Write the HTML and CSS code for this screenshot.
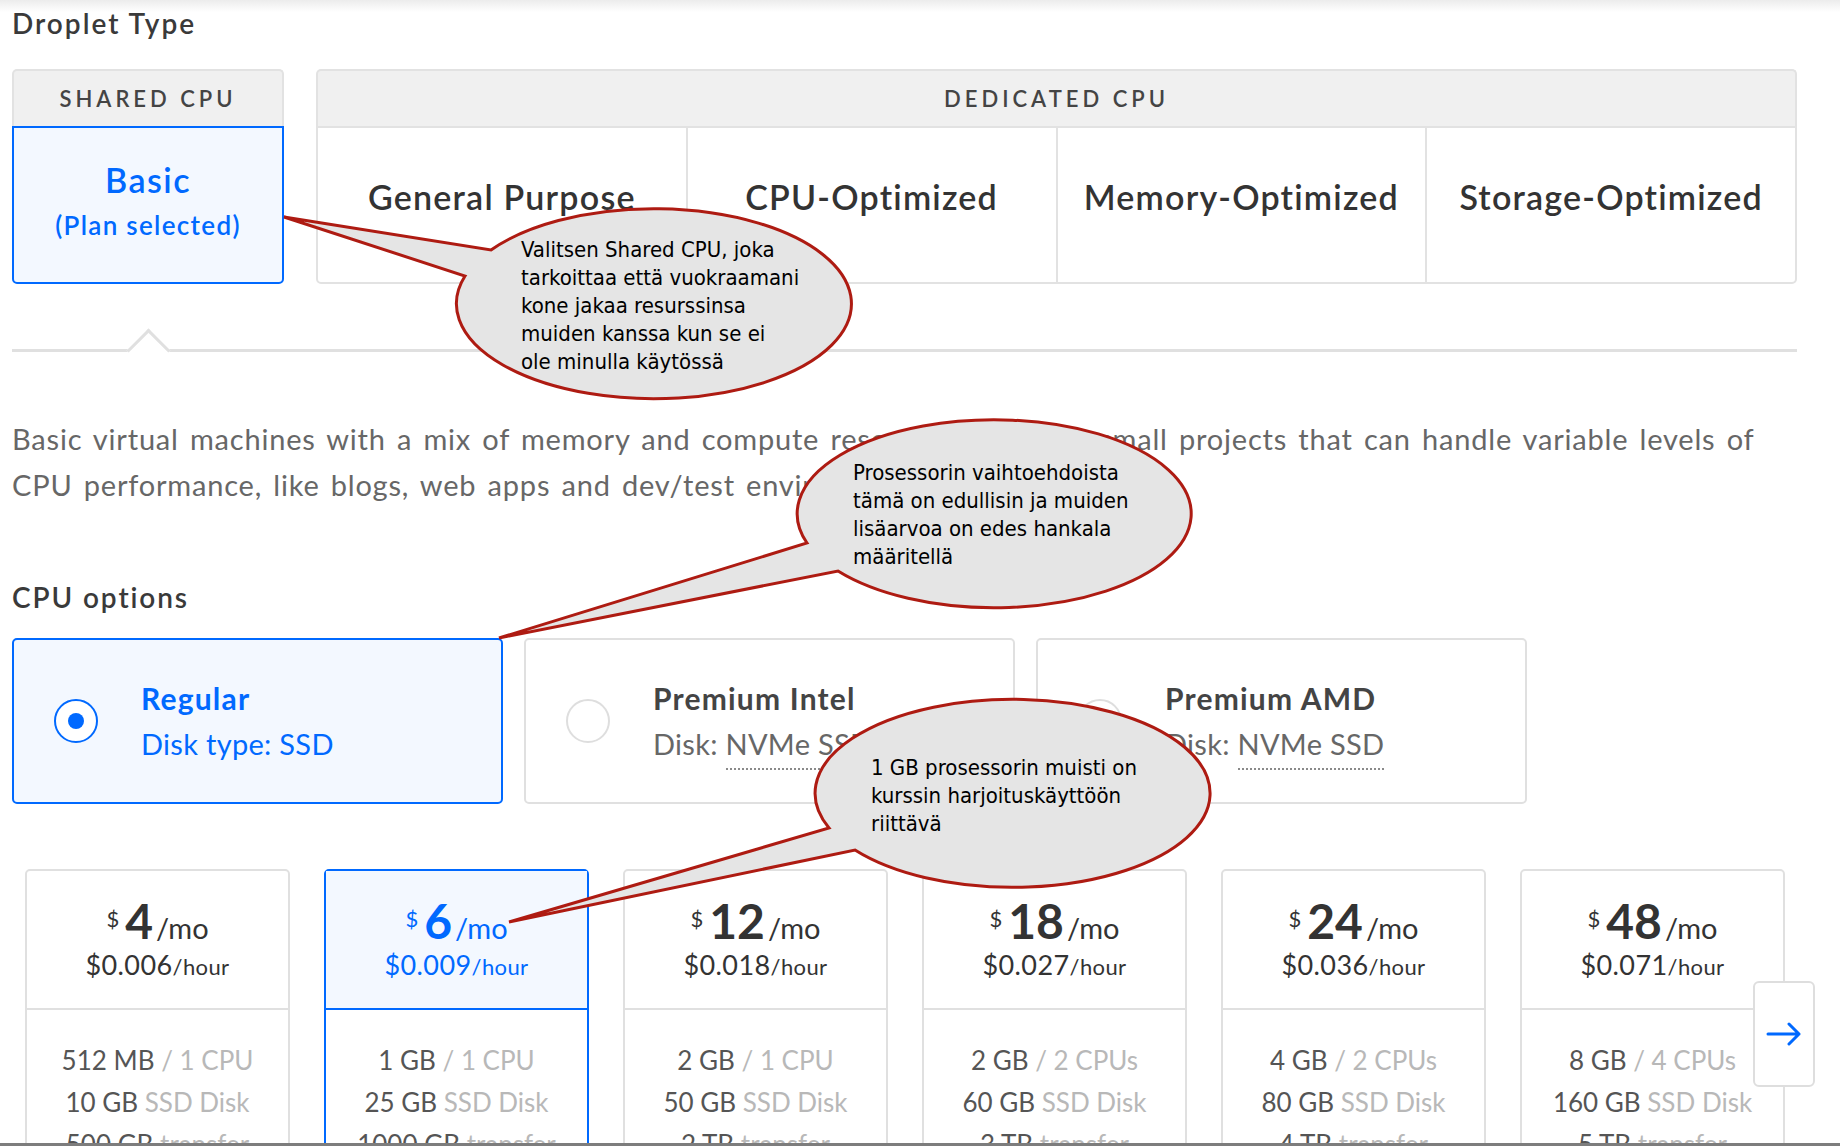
FILE: index.html
```html
<!DOCTYPE html>
<html lang="en">
<head>
<meta charset="utf-8">
<title>Droplet Type</title>
<link rel="stylesheet" href="styles.css">
</head>
<body>
<div class="page">
  <main class="content">
    <h2 class="section-title">Droplet Type</h2>

    <div class="plan-tabs">
      <div class="tab-group shared">
        <div class="group-head">SHARED CPU</div>
        <div class="group-body">
          <div class="plan">
            <span class="plan-name">Basic</span>
            <span class="plan-note">(Plan selected)</span>
          </div>
        </div>
      </div>
      <div class="tab-group dedicated">
        <div class="group-head">DEDICATED CPU</div>
        <div class="group-body">
          <div class="plan">General Purpose</div>
          <div class="plan">CPU-Optimized</div>
          <div class="plan">Memory-Optimized</div>
          <div class="plan">Storage-Optimized</div>
        </div>
      </div>
    </div>

    <div class="tab-rule"><span class="caret"></span></div>

    <p class="desc">Basic virtual machines with a mix of memory and compute resources. Best for small projects that can handle variable levels of<br>CPU performance, like blogs, web apps and dev/test environments.</p>

    <h3 class="section-sub">CPU options</h3>

    <div class="cpu-options">
      <div class="cpu-card selected">
        <span class="radio"></span>
        <div class="cpu-text">
          <div class="cpu-title">Regular</div>
          <div class="cpu-sub">Disk type: SSD</div>
        </div>
      </div>
      <div class="cpu-card">
        <span class="radio"></span>
        <div class="cpu-text">
          <div class="cpu-title">Premium Intel</div>
          <div class="cpu-sub">Disk: <span class="dotted">NVMe SSD</span></div>
        </div>
      </div>
      <div class="cpu-card">
        <span class="radio"></span>
        <div class="cpu-text">
          <div class="cpu-title">Premium AMD</div>
          <div class="cpu-sub">Disk: <span class="dotted">NVMe SSD</span></div>
        </div>
      </div>
    </div>

    <div class="pricing">
      <div class="price-card">
        <div class="price-head">
          <div class="price-main"><span class="cur">$</span><span class="amt">4</span><span class="mo">/mo</span></div>
          <div class="price-hour">$0.006<span class="per">/hour</span></div>
        </div>
        <div class="price-body">
          <div>512 MB <span class="dim">/ 1 CPU</span></div>
          <div>10 GB <span class="dim">SSD Disk</span></div>
          <div>500 GB <span class="dim">transfer</span></div>
        </div>
      </div>
      <div class="price-card selected">
        <div class="price-head">
          <div class="price-main"><span class="cur">$</span><span class="amt">6</span><span class="mo">/mo</span></div>
          <div class="price-hour">$0.009<span class="per">/hour</span></div>
        </div>
        <div class="price-body">
          <div>1 GB <span class="dim">/ 1 CPU</span></div>
          <div>25 GB <span class="dim">SSD Disk</span></div>
          <div>1000 GB <span class="dim">transfer</span></div>
        </div>
      </div>
      <div class="price-card">
        <div class="price-head">
          <div class="price-main"><span class="cur">$</span><span class="amt">12</span><span class="mo">/mo</span></div>
          <div class="price-hour">$0.018<span class="per">/hour</span></div>
        </div>
        <div class="price-body">
          <div>2 GB <span class="dim">/ 1 CPU</span></div>
          <div>50 GB <span class="dim">SSD Disk</span></div>
          <div>2 TB <span class="dim">transfer</span></div>
        </div>
      </div>
      <div class="price-card">
        <div class="price-head">
          <div class="price-main"><span class="cur">$</span><span class="amt">18</span><span class="mo">/mo</span></div>
          <div class="price-hour">$0.027<span class="per">/hour</span></div>
        </div>
        <div class="price-body">
          <div>2 GB <span class="dim">/ 2 CPUs</span></div>
          <div>60 GB <span class="dim">SSD Disk</span></div>
          <div>3 TB <span class="dim">transfer</span></div>
        </div>
      </div>
      <div class="price-card">
        <div class="price-head">
          <div class="price-main"><span class="cur">$</span><span class="amt">24</span><span class="mo">/mo</span></div>
          <div class="price-hour">$0.036<span class="per">/hour</span></div>
        </div>
        <div class="price-body">
          <div>4 GB <span class="dim">/ 2 CPUs</span></div>
          <div>80 GB <span class="dim">SSD Disk</span></div>
          <div>4 TB <span class="dim">transfer</span></div>
        </div>
      </div>
      <div class="price-card">
        <div class="price-head">
          <div class="price-main"><span class="cur">$</span><span class="amt">48</span><span class="mo">/mo</span></div>
          <div class="price-hour">$0.071<span class="per">/hour</span></div>
        </div>
        <div class="price-body">
          <div>8 GB <span class="dim">/ 4 CPUs</span></div>
          <div>160 GB <span class="dim">SSD Disk</span></div>
          <div>5 TB <span class="dim">transfer</span></div>
        </div>
      </div>
      <button class="next" type="button" aria-label="Next">
        <svg width="36" height="26" viewBox="0 0 36 26"><path d="M2 13 H33 M23 3 L33 13 L23 23" fill="none" stroke="#0069ff" stroke-width="3" stroke-linecap="round" stroke-linejoin="round"/></svg>
      </button>
    </div>
  </main>
  <div class="bottom-bar"></div>

  <svg class="callouts" width="1840" height="1146" viewBox="0 0 1840 1146">
    <path class="bubble" d="M 491 250 A 197.5 95 0 1 1 465 276 L 284 217 Z"/>
    <text class="note" x="521" y="257"><tspan x="521" dy="0">Valitsen Shared CPU, joka</tspan><tspan x="521" dy="28">tarkoittaa että vuokraamani</tspan><tspan x="521" dy="28">kone jakaa resurssinsa</tspan><tspan x="521" dy="28">muiden kanssa kun se ei</tspan><tspan x="521" dy="28">ole minulla käytössä</tspan></text>

    <path class="bubble" d="M 807 543 A 197 94 0 1 1 838 571 L 499 638 Z"/>
    <text class="note" x="853" y="480"><tspan x="853" dy="0">Prosessorin vaihtoehdoista</tspan><tspan x="853" dy="28">tämä on edullisin ja muiden</tspan><tspan x="853" dy="28">lisäarvoa on edes hankala</tspan><tspan x="853" dy="28">määritellä</tspan></text>

    <path class="bubble" d="M 829 828 A 197.5 94 0 1 1 855 850 L 509 922 Z"/>
    <text class="note" x="871" y="775"><tspan x="871" dy="0">1 GB prosessorin muisti on</tspan><tspan x="871" dy="28">kurssin harjoituskäyttöön</tspan><tspan x="871" dy="28">riittävä</tspan></text>
  </svg>
</div>
</body>
</html>
```

FILE: styles.css
```css
* { box-sizing: border-box; }
html, body { margin: 0; padding: 0; }
body {
  background: #fff;
  font-family: "Lato", "Liberation Sans", sans-serif;
  color: #333;
}

.page {
  position: relative;
  width: 1840px;
  height: 1146px;
  overflow: hidden;
  display: flex;
  flex-direction: column;
  background: linear-gradient(#ececec, #ffffff 12px);
}
.content {
  flex: 1;
  overflow: hidden;
  padding: 7px 43px 0 12px;
}

.section-title {
  margin: 0 0 30px;
  font-size: 28px;
  line-height: 32px;
  font-weight: 600;
  letter-spacing: 2px;
  color: #3a3a3a;
}

/* plan tabs */
.plan-tabs { display: flex; gap: 32px; }
.tab-group { display: flex; flex-direction: column; }
.tab-group.shared { width: 272px; flex: none; }
.tab-group.dedicated { flex: 1; }
.group-head {
  height: 57px;
  border: 2px solid #e2e2e2;
  border-bottom: 0;
  border-radius: 5px 5px 0 0;
  background: #f0f0f0;
  display: flex;
  align-items: center;
  justify-content: center;
  font-size: 22px;
  letter-spacing: 4px;
  font-weight: 600;
  color: #444;
}
.group-body {
  height: 158px;
  border: 2px solid #e2e2e2;
  border-radius: 0 0 5px 5px;
  display: flex;
}
.shared .group-body { border-color: #0069ff; background: #f3f8ff; }
.plan {
  flex: 1;
  display: flex;
  flex-direction: column;
  align-items: center;
  justify-content: center;
  font-size: 34px;
  letter-spacing: 1.2px;
  font-weight: 600;
  color: #333;
  padding-bottom: 18px;
}
.dedicated .plan + .plan { border-left: 2px solid #e2e2e2; }
.shared .plan { padding-bottom: 9px; color: #0069ff; }
.plan-name { font-size: 34px; line-height: 44px; letter-spacing: 1.5px; }
.plan-note { font-size: 26px; line-height: 36px; letter-spacing: 1.3px; margin-top: 5px; }

.tab-rule {
  position: relative;
  margin-top: 65px;
  height: 3px;
  background: #e0e0e0;
}
.caret {
  position: absolute;
  left: 120.5px;
  top: -14px;
  width: 31px;
  height: 31px;
  background: #fff;
  border-top: 3px solid #e0e0e0;
  border-left: 3px solid #e0e0e0;
  transform: rotate(45deg);
}

.desc {
  margin: 64px 0 0;
  font-size: 29px;
  line-height: 46px;
  letter-spacing: 0.8px;
  word-spacing: 3px;
  color: #676767;
  white-space: nowrap;
}

.section-sub {
  margin: 73px 0 25px;
  font-size: 28px;
  line-height: 32px;
  font-weight: 600;
  letter-spacing: 1.9px;
  color: #3a3a3a;
}

/* cpu options */
.cpu-options { display: flex; gap: 21px; }
.cpu-card {
  width: 491px;
  height: 166px;
  border: 2px solid #e0e0e0;
  border-radius: 5px;
  display: flex;
  align-items: center;
  padding-left: 40px;
  gap: 43px;
  background: #fff;
}
.cpu-card.selected { border-color: #0069ff; background: #f3f8ff; }
.radio {
  flex: none;
  width: 44px;
  height: 44px;
  border-radius: 50%;
  border: 2px solid #dedede;
  background: #fff;
  display: flex;
  align-items: center;
  justify-content: center;
}
.selected .radio { border-color: #0069ff; }
.selected .radio::after {
  content: "";
  width: 16px;
  height: 16px;
  border-radius: 50%;
  background: #0069ff;
}
.cpu-title { font-size: 30px; line-height: 46px; font-weight: 700; letter-spacing: 1.2px; color: #444; }
.cpu-sub { font-size: 29px; line-height: 46px; letter-spacing: 0.3px; color: #676767; }
.selected .cpu-title, .selected .cpu-sub { color: #0069ff; }
.dotted { border-bottom: 2px dotted #8a8a8a; padding-bottom: 7px; }

/* pricing */
.pricing {
  position: relative;
  display: flex;
  gap: 34px;
  margin-top: 65px;
  padding-left: 13px;
}
.price-card {
  flex: none;
  width: 265px;
  height: 320px;
  border: 2px solid #e0e0e0;
  border-radius: 5px;
  background: #fff;
  color: #333;
}
.price-head {
  height: 139px;
  border-bottom: 2px solid #e0e0e0;
  padding-top: 26px;
  text-align: center;
}
.price-main { font-size: 48px; line-height: 48px; height: 48px; }
.cur { font-size: 22px; line-height: 1; vertical-align: 12px; margin-right: 6px; }
.amt { font-weight: 700; }
.mo { font-size: 29px; line-height: 1; margin-left: 3px; }
.price-hour { margin-top: 2px; font-size: 27px; line-height: 35px; letter-spacing: 0.4px; }
.per { font-size: 22px; }
.price-body {
  padding-top: 29px;
  text-align: center;
  font-size: 26px;
  line-height: 42px;
  color: #555;
}
.dim { color: #b8b8b8; }
.price-card.selected { border-color: #0069ff; }
.price-card.selected .price-head { background: #f3f8ff; border-bottom-color: #0069ff; color: #0069ff; }

.next {
  position: absolute;
  left: 1741px;
  top: 112px;
  width: 62px;
  height: 106px;
  padding: 0;
  border: 2px solid #dedede;
  border-radius: 6px;
  background: #fff;
  display: flex;
  align-items: center;
  justify-content: center;
}

.bottom-bar { flex: none; height: 3px; background: #7d7d7d; }

/* annotation callouts */
.callouts {
  position: absolute;
  left: 0;
  top: 0;
  pointer-events: none;
}
.bubble {
  fill: #e5e5e5;
  stroke: #ae1b12;
  stroke-width: 3;
  stroke-linejoin: miter;
}
.note {
  font-family: "DejaVu Sans Condensed", "DejaVu Sans", sans-serif;
  font-stretch: condensed;
  font-size: 22px;
  fill: #000;
}
```
